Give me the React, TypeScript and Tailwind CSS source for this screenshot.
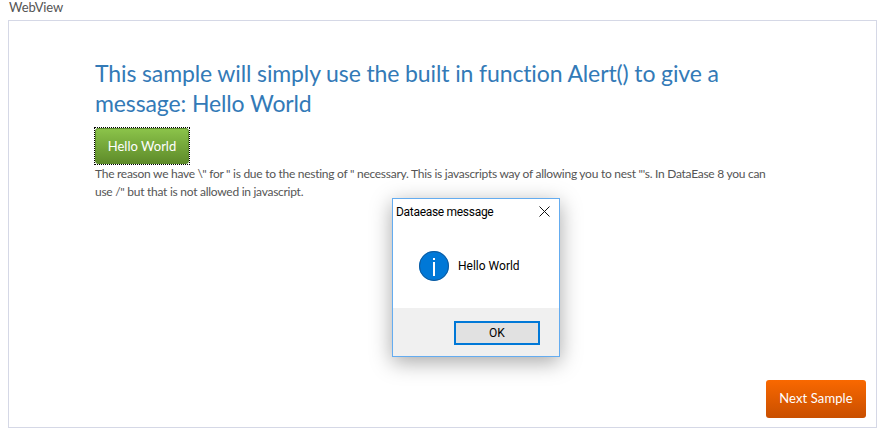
import React from "react";

export default function App() {
  return (
    <div className="relative flex h-[428px] w-[878px] flex-col overflow-hidden bg-white font-['Lato',sans-serif] text-[#555]">
      <div className="h-5 pl-[9px] text-[13px] leading-[15px] tracking-[-0.1px]">WebView</div>
      <div className="mr-[1px] ml-2 flex h-[408px] flex-col border border-[#d5d8e6] pt-[37px] pl-[86px]">
        <h1 className="w-[640px] text-[23px] leading-[30px] font-normal tracking-[-0.12px] text-[#337ab7]">
          This sample will simply use the built in function Alert() to give a message: Hello World
        </h1>
        <div className="mt-[9px] -ml-[1px] h-[38px] w-[96px] border border-dotted border-black">
          <button className="block h-[36px] w-[94px] rounded-[3px] border border-[#5c8a2c] bg-gradient-to-b from-[#8bc34a] to-[#5f8c2a] pt-[1px] text-[13px] text-white">
            Hello World
          </button>
        </div>
        <p className="w-[685px] text-[12px] leading-[18px] tracking-[-0.27px] text-[#555]">
          The reason we have \" for " is due to the nesting of " necessary. This is javascripts way of allowing you to nest "'s. In DataEase 8 you can use /" but that is not allowed in javascript.
        </p>
        <button className="mt-auto mr-[10px] mb-[9px] h-[38px] w-[100px] self-end rounded-[3px] bg-gradient-to-b from-[#f96800] to-[#c94f00] text-[13px] tracking-[0.1px] text-white">
          Next Sample
        </button>
      </div>
      <div className="absolute top-[198px] left-[392px] flex h-[159px] w-[168px] flex-col border border-[#64acf0] bg-white font-['Roboto',sans-serif] text-[12px] text-black shadow-[0_5px_20px_rgba(0,0,0,0.35)]">
        <div className="flex h-[25px] items-center justify-between pr-[9px] pl-[3px]">
          <span className="tracking-[-0.3px]">Dataease message</span>
          <svg width="11" height="11" viewBox="0 0 11 11" fill="none" stroke="#111" strokeWidth="1">
            <path d="M0.5 0.5L10.5 10.5M10.5 0.5L0.5 10.5" />
          </svg>
        </div>
        <div className="flex flex-1 items-center gap-[9px] pl-[26px]">
          <svg width="30" height="30" viewBox="0 0 30 30">
            <circle cx="15" cy="15" r="15" fill="#0078d7" />
            <circle cx="15" cy="15" r="14.5" fill="none" stroke="#135a9a" strokeWidth="1" />
            <rect x="14" y="11" width="2" height="14" fill="#fff" />
            <rect x="14" y="7" width="2" height="2" fill="#fff" />
          </svg>
          <span>Hello World</span>
        </div>
        <div className="flex h-[48px] items-start justify-end bg-[#f0f0f0] pt-[13px] pr-[19px]">
          <div className="flex h-[24px] w-[86px] items-center justify-center border-2 border-[#0078d7] bg-[#e1e1e1]">OK</div>
        </div>
      </div>
    </div>
  );
}
